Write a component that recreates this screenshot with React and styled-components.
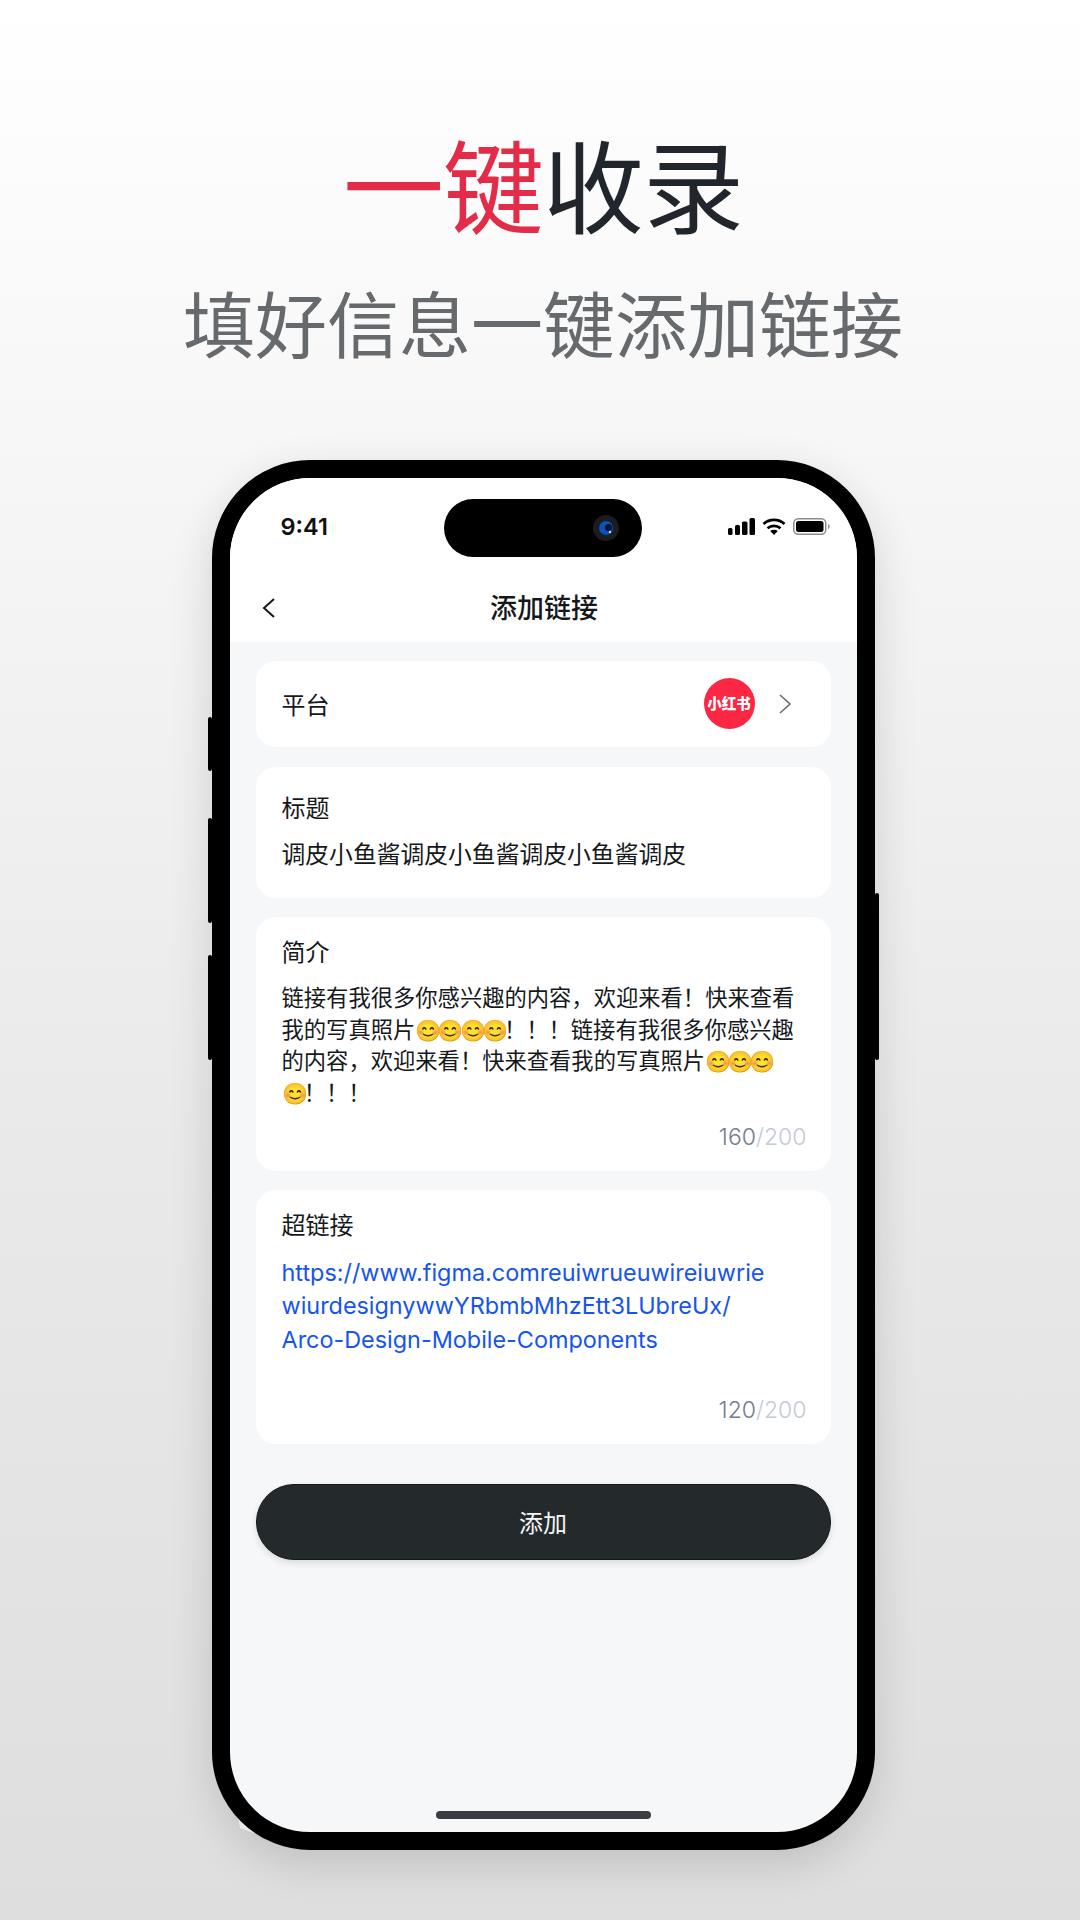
import styled, { createGlobalStyle } from "styled-components";

const GlobalStyle = createGlobalStyle`
  html, body { margin: 0; padding: 0; }
  body { font-family: "Inter", "Noto Sans CJK SC", sans-serif; }
`;

const cjk = `"Noto Sans CJK SC", "Noto Sans", sans-serif`;
const latin = `"Inter", "Noto Sans CJK SC", sans-serif`;

const Page = styled.div`
  width: 1080px;
  height: 1920px;
  overflow: hidden;
  isolation: isolate;
  box-sizing: border-box;
  padding-left: 6px;
  display: flex;
  flex-direction: column;
  align-items: center;
  background: linear-gradient(180deg, #ffffff 0%, #f6f6f7 25%, #e9e9ea 60%, #dedede 100%);
`;

const Headline = styled.h1`
  margin: 118px 0 0;
  font: 400 101px/128px ${cjk};
  letter-spacing: -1px;
  color: #20262c;
  span { color: #e22c48; }
`;

const Subline = styled.h2`
  margin: 30px 0 0;
  font: 400 72px/90px ${cjk};
  color: #666a6c;
`;

const PhoneFrame = styled.div`
  position: relative;
  margin-top: 94px;
  width: 663px;
  height: 1390px;
  box-sizing: border-box;
  border: 18px solid #000;
  border-radius: 98px;
  background: #f6f7f9;
  box-shadow: 0 14px 44px rgba(0, 0, 0, 0.14);
`;

const SideKey = styled.i`
  position: absolute;
  width: 4px;
  background: #000;
  border-radius: 2px;
  top: ${(p) => p.$top}px;
  height: ${(p) => p.$height}px;
  ${(p) => (p.$right ? "right: -22px;" : "left: -22px;")}
`;

// white sliver that pokes out behind the lower left corner of the frame
const CornerSliver = styled.svg`
  position: absolute;
  z-index: -1;
  left: 0;
  top: 1327px;
`;

const Screen = styled.div`
  height: 100%;
  border-radius: 80px;
  overflow: hidden;
  display: flex;
  flex-direction: column;
  position: relative;
`;

const Top = styled.div`
  background: #fff;
  flex: none;
  height: 164px;
  display: flex;
  flex-direction: column;
`;

const StatusBar = styled.div`
  height: 100px;
  flex: none;
  box-sizing: border-box;
  position: relative;
  display: flex;
  align-items: center;
  justify-content: space-between;
  padding: 0 26px 3px 51px;
`;

const Time = styled.span`
  font: 600 23.500px/30px ${latin};
  color: #111;
`;

const Island = styled.div`
  position: absolute;
  top: 21px;
  left: 214px;
  width: 198px;
  height: 58px;
  border-radius: 29px;
  background: #000;
`;

const Lens = styled.svg`
  position: absolute;
  right: 23px;
  top: 16px;
`;

const StatusIcons = styled.div`
  display: flex;
  align-items: center;
  gap: 7px;
`;

const NavBar = styled.div`
  flex: 1;
  position: relative;
  display: flex;
  align-items: center;
  justify-content: center;
  padding: 0 0 6px 2px;
`;

const NavTitle = styled.div`
  font: 500 27px/34px ${cjk};
  color: #15181b;
`;

const Back = styled.div`
  position: absolute;
  left: 29px;
  top: 19px;
  line-height: 0;
`;

const Content = styled.div`
  flex: 1;
  padding: 19px 26px 0;
  display: flex;
  flex-direction: column;
  gap: 19.5px;
`;

const Card = styled.div`
  background: #fff;
  border-radius: 20px;
  padding: ${(p) => p.$top || 17}px 26px 16px;
  height: ${(p) => p.$height}px;
  box-sizing: border-box;
  position: relative;
`;

const PlatformCard = styled(Card)`
  display: flex;
  align-items: center;
  justify-content: space-between;
  padding: 0 26px 1px;
`;

const Label = styled.div`
  font: 400 24px/34px ${cjk};
  color: #16191c;
`;

const PlatformRight = styled.div`
  display: flex;
  align-items: center;
  gap: 19px;
  margin-right: 9px;
`;

const Badge = styled.div`
  width: 51px;
  height: 51px;
  border-radius: 50%;
  background: #fb2743;
  color: #fff;
  display: flex;
  align-items: center;
  justify-content: center;
  font: 900 14.500px/1 ${cjk};
`;

const TitleValue = styled.div`
  margin-top: 12px;
  font: 400 23.800px/33px ${cjk};
  color: #16191c;
  white-space: pre;
`;

const Description = styled.div`
  margin-top: 13px;
  font: 400 22.300px/31.700px ${cjk};
  color: #16191c;
  white-space: pre;
`;

const Emoji = styled.span`
  font-size: 21px;
  line-height: 1;
  letter-spacing: -3.850px;
`;

const LinkText = styled.div`
  margin-top: 15px;
  font: 400 23.400px/33.400px ${latin};
  color: #1554f0;
  white-space: pre;
`;

const Counter = styled.div`
  position: absolute;
  right: 24px;
  bottom: 20px;
  font: 300 23px/28px ${latin};
  color: #727c8a;
  span { color: #c5cad5; }
`;

const AddButton = styled.button`
  margin-top: 20.500px;
  height: 76px;
  border: 1px solid #14181a;
  border-radius: 38px;
  background: #24292c;
  color: #f4f5f5;
  font: 400 24px/1 ${cjk};
  box-shadow: 0 3px 7px rgba(0, 0, 0, 0.12);
`;

const HomeBar = styled.div`
  position: absolute;
  left: 206px;
  bottom: 13px;
  width: 215px;
  height: 8px;
  border-radius: 4px;
  background: #3a3d42;
`;

const Cell = () => (
  <svg width="27" height="17" viewBox="0 0 27 17" fill="#000">
    <rect x="0" y="10" width="4.500" height="7" rx="1.500" />
    <rect x="7" y="7" width="5" height="10" rx="1.500" />
    <rect x="14" y="3.500" width="5.500" height="13.500" rx="1.500" />
    <rect x="21.500" y="0" width="5.500" height="17" rx="1.500" />
  </svg>
);

const Wifi = () => (
  <svg width="24" height="17" viewBox="0 0 24 17" fill="none" stroke="#000" strokeWidth="2.800">
    <path d="M1.500 6C7.500.6 16.500.6 22.500 6" />
    <path d="M5.500 10.200C9.200 7 14.800 7 18.500 10.200" />
    <path d="M12 17 8.200 13C10.500 11.300 13.500 11.300 15.800 13Z" fill="#000" stroke="none" />
  </svg>
);

const Battery = () => (
  <svg width="38" height="17" viewBox="0 0 38 17" fill="none">
    <rect x=".75" y=".75" width="32" height="15.500" rx="4.500" stroke="#8c8c8c" strokeWidth="1.500" />
    <rect x="3" y="3" width="27.500" height="11" rx="2.500" fill="#000" />
    <path d="M35 6c1.200.4 1.800 1.300 1.800 2.500S36.200 10.600 35 11z" fill="#9a9a9a" />
  </svg>
);

const Chevron = ({ dir = "right", color = "#5f6b7a", width = "1.600" }) => (
  <svg width="22" height="22" viewBox="0 0 22 22" fill="none" stroke={color} strokeWidth={width}>
    <path d={dir === "right" ? "M6 2l10 9-10 9" : "M15 2 5 11l10 9"} />
  </svg>
);

const App = () => (
  <Page>
    <GlobalStyle />
    <Headline>
      <span>一键</span>收录
    </Headline>
    <Subline>填好信息一键添加链接</Subline>
    <PhoneFrame>
      <CornerSliver width="42" height="30" viewBox="0 0 42 30">
        <polygon points="2,3 8,13 10,23 26,29 40,20 20,0" fill="#fff" />
      </CornerSliver>
      <SideKey $top={239} $height={54} />
      <SideKey $top={340} $height={105} />
      <SideKey $top={477} $height={105} />
      <SideKey $top={415} $height={167} $right />
      <Screen>
        <Top>
          <StatusBar>
            <Time>9:41</Time>
            <Island>
              <Lens width="26" height="26" viewBox="0 0 26 26">
                <circle cx="13" cy="13" r="13" fill="#1a1c20" />
                <circle cx="13" cy="13" r="7" fill="#0d50b8" />
                <circle cx="15.500" cy="12.500" r="3.500" fill="#07152e" />
                <circle cx="17" cy="17" r="1.200" fill="#c9d4e2" />
              </Lens>
            </Island>
            <StatusIcons>
              <Cell />
              <Wifi />
              <Battery />
            </StatusIcons>
          </StatusBar>
          <NavBar>
            <Back>
              <Chevron dir="left" color="#15181b" width="2" />
            </Back>
            <NavTitle>添加链接</NavTitle>
          </NavBar>
        </Top>
        <Content>
          <PlatformCard $height={86}>
            <Label>平台</Label>
            <PlatformRight>
              <Badge>小红书</Badge>
              <Chevron />
            </PlatformRight>
          </PlatformCard>
          <Card $height={131} $top={23}>
            <Label>标题</Label>
            <TitleValue>调皮小鱼酱调皮小鱼酱调皮小鱼酱调皮</TitleValue>
          </Card>
          <Card $height={253.5}>
            <Label>简介</Label>
            <Description>
              {"链接有我很多你感兴趣的内容，欢迎来看！快来查看\n我的写真照片"}
              <Emoji>😊😊😊😊</Emoji>
              {"！！！链接有我很多你感兴趣\n的内容，欢迎来看！快来查看我的写真照片"}
              <Emoji>😊😊😊</Emoji>
              {"\n"}
              <Emoji>😊</Emoji>
              {"！！！"}
            </Description>
            <Counter>160<span>/200</span></Counter>
          </Card>
          <Card $height={253.5}>
            <Label>超链接</Label>
            <LinkText>{"https://www.figma.comreuiwrueuwireiuwrie\nwiurdesignywwYRbmbMhzEtt3LUbreUx/\nArco-Design-Mobile-Components"}</LinkText>
            <Counter>120<span>/200</span></Counter>
          </Card>
          <AddButton>添加</AddButton>
        </Content>
        <HomeBar />
      </Screen>
    </PhoneFrame>
  </Page>
);

export default App;
